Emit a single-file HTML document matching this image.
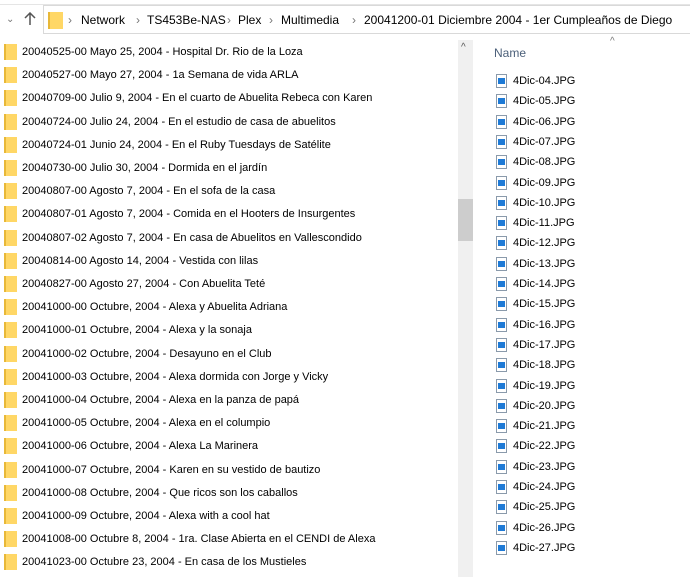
<!DOCTYPE html><html><head><style>
body{margin:0;width:690px;height:577px;overflow:hidden;background:#fff;font-family:"Liberation Sans",sans-serif;font-size:11px;color:#000;position:relative}
.top{position:absolute;left:0;top:0;width:690px;height:4px;border-bottom:1px solid #e5e5e5}
.addr{position:absolute;left:43px;top:5px;width:660px;height:29px;border:1px solid #d9d9d9;box-sizing:border-box}
.addr span{position:absolute;top:7px;font-size:12px}
.fold{display:inline-block;width:13px;height:16px;background:#ffd766;border-left:2px solid #e8b838;box-sizing:border-box;vertical-align:middle}
.row{position:absolute;left:4px;height:20px;line-height:20px;white-space:nowrap}
.row .fold{margin-right:5px}
.sb{position:absolute;left:458px;top:40px;width:15px;height:537px;background:#f0f0f0}
.th{position:absolute;left:458px;top:199px;width:15px;height:42px;background:#cdcdcd}
.f{position:absolute;left:496px;height:18px;line-height:18px;white-space:nowrap}
.ic{display:inline-block;width:11px;height:14px;border:1px solid #8a9aab;box-sizing:border-box;vertical-align:middle;margin-right:6px;position:relative;background:#fff}
.ic:after{content:"";position:absolute;left:1px;top:3px;width:7px;height:6px;background:#1e7ad6}
</style></head><body>
<div class="top"></div>
<div style="position:absolute;left:6px;top:14px;font-size:10px;color:#777">&#8964;</div>
<svg style="position:absolute;left:24px;top:12px" width="12" height="14"><path d="M6 1V13M1 6L6 1L11 6" stroke="#555" stroke-width="1.5" fill="none"/></svg>
<div class="addr">
<span class="fold" style="position:absolute;left:4px;top:6px;width:15px;height:17px"></span>
<span style="left:24px;color:#777">›</span><span style="left:37px">Network</span>
<span style="left:92px;color:#777">›</span><span style="left:103px">TS453Be-NAS</span>
<span style="left:183px;color:#777">›</span><span style="left:194px">Plex</span>
<span style="left:225px;color:#777">›</span><span style="left:237px">Multimedia</span>
<span style="left:308px;color:#777">›</span><span style="left:320px">20041200-01 Diciembre 2004 - 1er Cumpleaños de Diego</span>
</div>
<div class="sb"></div><div class="th"></div>
<div style="position:absolute;left:461px;top:42px;font-size:10px;color:#555">^</div>
<div style="position:absolute;left:494px;top:46px;color:#4c607a;font-size:12px">Name</div>
<div style="position:absolute;left:610px;top:36px;color:#777;font-size:10px">^</div>
<div id="L"></div><div id="R"></div>
<script>
var a=["20040525-00 Mayo 25, 2004 - Hospital Dr. Rio de la Loza","20040527-00 Mayo 27, 2004 - 1a Semana de vida ARLA","20040709-00 Julio 9, 2004 - En el cuarto de Abuelita Rebeca con Karen","20040724-00 Julio 24, 2004 - En el estudio de casa de abuelitos","20040724-01 Junio 24, 2004 - En el Ruby Tuesdays de Satélite","20040730-00 Julio 30, 2004 - Dormida en el jardín","20040807-00 Agosto 7, 2004 - En el sofa de la casa","20040807-01 Agosto 7, 2004 - Comida en el Hooters de Insurgentes","20040807-02 Agosto 7, 2004 - En casa de Abuelitos en Vallescondido","20040814-00 Agosto 14, 2004 - Vestida con lilas","20040827-00 Agosto 27, 2004 - Con Abuelita Teté","20041000-00 Octubre, 2004 - Alexa y Abuelita Adriana","20041000-01 Octubre, 2004 - Alexa y la sonaja","20041000-02 Octubre, 2004 - Desayuno en el Club","20041000-03 Octubre, 2004 - Alexa dormida con Jorge y Vicky","20041000-04 Octubre, 2004 - Alexa en la panza de papá","20041000-05 Octubre, 2004 - Alexa en el columpio","20041000-06 Octubre, 2004 - Alexa La Marinera","20041000-07 Octubre, 2004 - Karen en su vestido de bautizo","20041000-08 Octubre, 2004 - Que ricos son los caballos","20041000-09 Octubre, 2004 - Alexa with a cool hat","20041008-00 Octubre 8, 2004 - 1ra. Clase Abierta en el CENDI de Alexa","20041023-00 Octubre 23, 2004 - En casa de los Mustieles"];
var h="";a.forEach(function(t,i){h+='<div class="row" style="top:'+(42+i*23.2)+'px"><span class="fold"></span>'+t+'</div>'});
document.getElementById("L").innerHTML=h;h="";
for(var i=4;i<=27;i++){h+='<div class="f" style="top:'+(72+(i-4)*20.3)+'px"><span class="ic"></span>4Dic-'+(i<10?"0":"")+i+'.JPG</div>'}
document.getElementById("R").innerHTML=h;
</script>
</body></html>
